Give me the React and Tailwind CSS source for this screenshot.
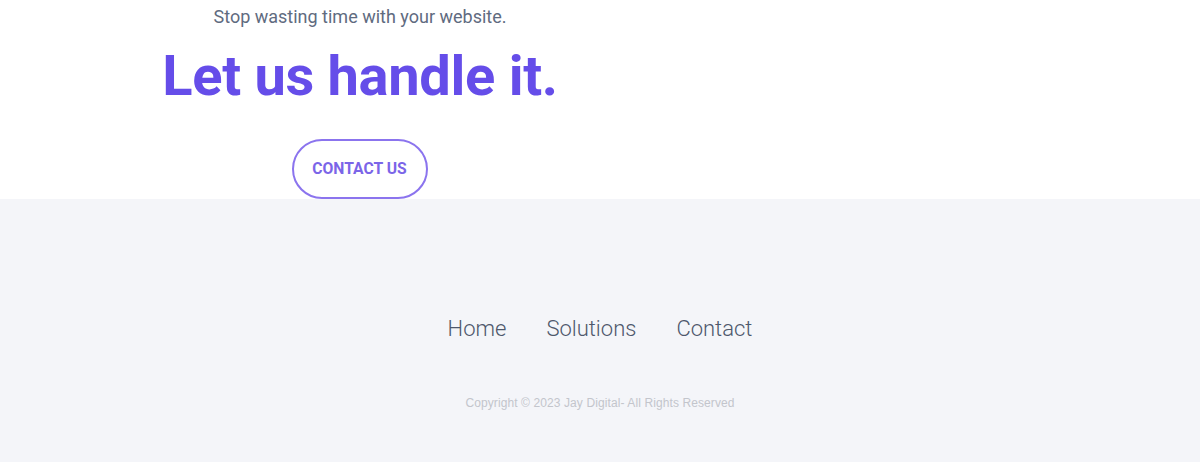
import React from 'react';

export default function App() {
  return (
    <div className="min-h-[462px] bg-white font-['Roboto',sans-serif]">
      {/* Hero tail */}
      <section className="bg-white">
        <div className="w-[720px] flex flex-col items-center">
          <p className="text-[18px] leading-[34px] text-[#5f6b80]">Stop wasting time with your website.</p>
          <h1 className="mt-[6px] text-[56px] leading-[72px] font-bold tracking-[-0.3px] text-[#654de9]">Let us handle it.</h1>
          <a className="mt-[27px] ml-[-1px] w-[136px] h-[60px] flex items-center justify-center rounded-full border-2 border-[#8b74ee] text-[15.7px] font-bold text-[#7b65e8]">
            CONTACT US
          </a>
        </div>
      </section>

      {/* Footer */}
      <footer className="bg-[#f4f5f9] h-[263px] flex flex-col items-center">
        <nav className="mt-[113px] flex gap-[40px] text-[22px] font-light text-[#4e586c]">
          <a>Home</a>
          <a>Solutions</a>
          <a>Contact</a>
        </nav>
        <p className="mt-[49px] font-['Liberation_Sans',sans-serif] text-[12px] tracking-[0.1px] text-[#c3c5cc]">
          Copyright © 2023 Jay Digital- All Rights Reserved
        </p>
      </footer>
    </div>
  );
}
